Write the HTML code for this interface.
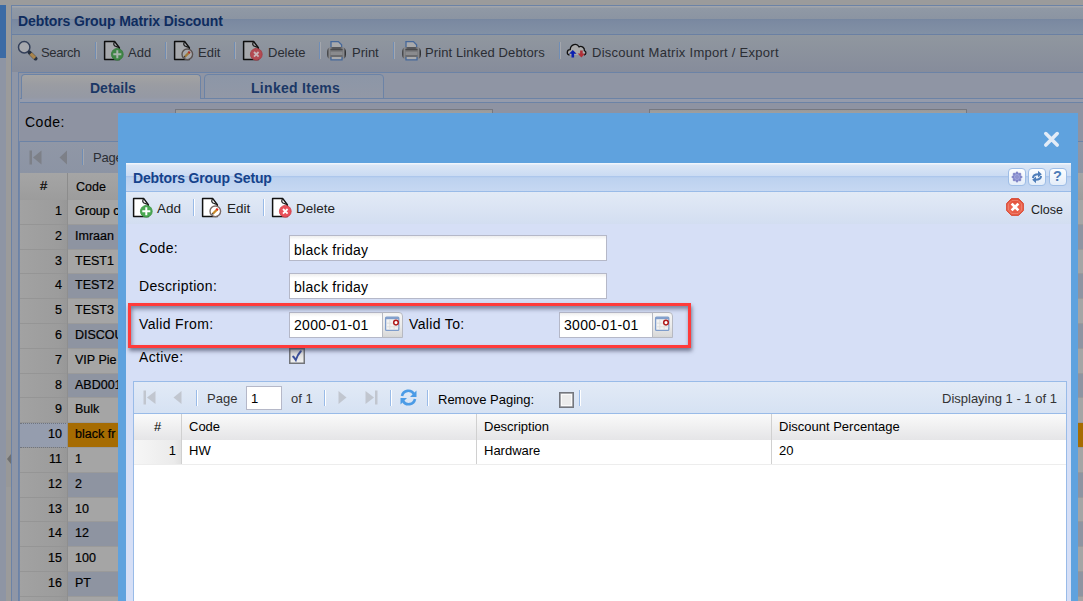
<!DOCTYPE html>
<html><head><meta charset="utf-8">
<style>
*{box-sizing:border-box}
html,body{margin:0;padding:0}
body{width:1083px;height:601px;overflow:hidden;position:relative;background:#9b9b9b;font-family:"Liberation Sans",sans-serif;color:#000}
.a{position:absolute}
.t{position:absolute;white-space:nowrap;line-height:1}
.bgt{color:#2a2d33;font-size:13px}
.sep{position:absolute;width:1px;background:#6f8db5;box-shadow:1px 0 0 #a4a7ad}
/* background grid */
.rn{position:absolute;left:20px;width:47px;text-align:right;padding-right:5px;font-size:12px;color:#111}
.rc{position:absolute;left:68px;width:50px;font-size:12px;color:#111;padding-left:7px;overflow:hidden}
/* dialog */
.lbl{position:absolute;font-size:14px;color:#000;white-space:nowrap;line-height:1;letter-spacing:0.35px}
.fld{position:absolute;background:#fff;border:1px solid #b5b8c8;background:linear-gradient(#eeeeee 0,#ffffff 4px,#fff 100%)}
.fld span{position:absolute;left:4px;margin-top:1px;font-size:14px;white-space:nowrap;line-height:1;letter-spacing:0.3px}
.dsep{position:absolute;width:1px;background:#99bbe8;box-shadow:1px 0 0 #fff}
</style></head>
<body>
<svg width="0" height="0" style="position:absolute"><defs><linearGradient id="prg" x1="0" y1="0" x2="1" y2="0"><stop offset="0" stop-color="#3a3b3e"/><stop offset="0.14" stop-color="#8c8d90"/><stop offset="0.3" stop-color="#55565a"/><stop offset="0.7" stop-color="#55565a"/><stop offset="0.86" stop-color="#8c8d90"/><stop offset="1" stop-color="#1e1f22"/></linearGradient></defs></svg>
<!-- left edge -->
<div class="a" style="left:0;top:5px;width:6px;height:596px;background:#8e95a4"></div>
<div class="a" style="left:0;top:5px;width:6px;height:53px;background:#3c6ba5"></div>
<div class="a" style="left:6px;top:430px;width:5px;height:57px;background:#989898"></div>
<svg class="a" style="left:6px;top:453px" width="6" height="12"><path d="M5 1 L1 6 L5 11 Z" fill="#6f6f6f"/></svg>

<!-- main panel -->
<div class="a" style="left:11px;top:5px;width:1072px;height:596px;background:#8f96a6;border-left:1px solid #6c83a6;border-top:1px solid #6c83a6"></div>
<!-- header -->
<div class="a" style="left:12px;top:6px;width:1071px;height:28px;background:linear-gradient(#a2a5ab 0,#a2a5ab 1px,#9099a5 2px,#8b94a2 13px,#7686a0 13px,#7b89a1 15px,#8291a5 28px)"></div>
<div class="a" style="left:12px;top:34px;width:1071px;height:1px;background:#6a80a3"></div>
<div class="t" style="left:18px;top:14px;font-size:14px;font-weight:bold;color:#0f2c5e;letter-spacing:-0.1px">Debtors Group Matrix Discount</div>
<!-- toolbar -->
<div class="a" style="left:12px;top:35px;width:1071px;height:37px;background:linear-gradient(#90979f,#868c9b)"></div>
<!-- toolbar items -->
<svg class="a" style="left:17px;top:40px" width="21" height="21" viewBox="0 0 21 21">
  <circle cx="7.2" cy="7.2" r="5.7" fill="#a7a9ae" stroke="#34405a" stroke-width="1.5"/>
  <path d="M12.6 12.6 L18.6 18.6" stroke="#26303f" stroke-width="3.8" stroke-linecap="round"/>
  <path d="M13.6 13.6 L18 18" stroke="#a8844c" stroke-width="3.4" stroke-linecap="butt"/>
</svg>
<div class="t bgt" style="left:41px;top:46px;letter-spacing:-0.35px">Search</div>
<div class="sep" style="left:95px;top:42px;height:17px"></div>

<svg class="a" style="left:103px;top:40px" width="21" height="21" viewBox="0 0 21 21">
  <path d="M1.6 1.6 H11.8 L16.3 7.6 V19.4 H1.6 Z" fill="#a6a8ac" stroke="#0d0d0d" stroke-width="1.5" stroke-linejoin="round"/><path d="M11.8 1.6 C10 3.5 10.6 6.2 13 6.4 L16.3 7.6" fill="none" stroke="#1a1a1a" stroke-width="1.3"/>
  <circle cx="14.3" cy="14.3" r="5.9" fill="#3f8646" stroke="#357a3c" stroke-width="0.8"/><path d="M14.3 10.3 V18.3 M10.3 14.3 H18.3" stroke="#a9b3ad" stroke-width="2"/>
</svg>
<div class="t bgt" style="left:128px;top:46px">Add</div>
<div class="sep" style="left:165px;top:42px;height:17px"></div>

<svg class="a" style="left:173px;top:40px" width="21" height="21" viewBox="0 0 21 21">
  <path d="M1.6 1.6 H11.8 L16.3 7.6 V19.4 H1.6 Z" fill="#a6a8ac" stroke="#0d0d0d" stroke-width="1.5" stroke-linejoin="round"/><path d="M11.8 1.6 C10 3.5 10.6 6.2 13 6.4 L16.3 7.6" fill="none" stroke="#1a1a1a" stroke-width="1.3"/>
  <circle cx="14.3" cy="14.3" r="5.3" fill="#a6a8ac" stroke="#5a5250" stroke-width="1.4"/><path d="M11.8 16.8 L16.5 12.1" stroke="#a07a3a" stroke-width="2.2"/><path d="M15.6 13 L16.8 11.8" stroke="#b02a2a" stroke-width="2.2"/><path d="M11.3 17.3 L12 16.6" stroke="#222" stroke-width="1.5"/>
</svg>
<div class="t bgt" style="left:198px;top:46px">Edit</div>
<div class="sep" style="left:234px;top:42px;height:17px"></div>

<svg class="a" style="left:242px;top:40px" width="21" height="21" viewBox="0 0 21 21">
  <path d="M1.6 1.6 H11.8 L16.3 7.6 V19.4 H1.6 Z" fill="#a6a8ac" stroke="#0d0d0d" stroke-width="1.5" stroke-linejoin="round"/><path d="M11.8 1.6 C10 3.5 10.6 6.2 13 6.4 L16.3 7.6" fill="none" stroke="#1a1a1a" stroke-width="1.3"/>
  <circle cx="14.3" cy="14.3" r="5.9" fill="#b34a52" stroke="#a33c44" stroke-width="0.8"/><path d="M12 12 L16.6 16.6 M16.6 12 L12 16.6" stroke="#c9b5b8" stroke-width="1.8"/>
</svg>
<div class="t bgt" style="left:268px;top:46px">Delete</div>
<div class="sep" style="left:319px;top:42px;height:17px"></div>

<svg class="a" style="left:326px;top:40px" width="21" height="21" viewBox="0 0 21 21">
  <path d="M5 1.6 H12.4 L15.6 4.8 V9 H5 Z" fill="#a8a9ab" stroke="#46689a" stroke-width="1.3"/>
  <rect x="1" y="7" width="19" height="12.5" rx="4" ry="5" fill="url(#prg)"/>
  <rect x="4.5" y="9" width="12" height="8.5" fill="#6a6b6e"/>
  <rect x="4.5" y="11.5" width="12" height="3.5" fill="#8a8b8e"/>
  <path d="M4.5 9.5 H16.5" stroke="#4a4a4c" stroke-width="1"/>
  <path d="M5 17 V19.8 H16 V17" fill="#a9aaac" stroke="#46689a" stroke-width="1.3"/>
</svg>
<div class="t bgt" style="left:352px;top:46px">Print</div>
<div class="sep" style="left:393px;top:42px;height:17px"></div>

<svg class="a" style="left:401px;top:40px" width="21" height="21" viewBox="0 0 21 21">
  <path d="M5 1.6 H12.4 L15.6 4.8 V9 H5 Z" fill="#a8a9ab" stroke="#46689a" stroke-width="1.3"/>
  <rect x="1" y="7" width="19" height="12.5" rx="4" ry="5" fill="url(#prg)"/>
  <rect x="4.5" y="9" width="12" height="8.5" fill="#6a6b6e"/>
  <rect x="4.5" y="11.5" width="12" height="3.5" fill="#8a8b8e"/>
  <path d="M4.5 9.5 H16.5" stroke="#4a4a4c" stroke-width="1"/>
  <path d="M5 17 V19.8 H16 V17" fill="#a9aaac" stroke="#46689a" stroke-width="1.3"/>
</svg>
<div class="t bgt" style="left:425px;top:46px;letter-spacing:0.1px">Print Linked Debtors</div>
<div class="sep" style="left:559px;top:42px;height:17px"></div>

<svg class="a" style="left:566px;top:41px" width="21" height="19" viewBox="0 0 21 19">
  <path d="M3.5 14 C0.3 13.6 0.6 8.4 4.2 8.6 C4.6 3.6 10.6 1.4 13 5.8 C15.6 4.6 18.8 6.6 18.4 9.6 C20.6 10.4 20.4 13.8 18 14 Z" fill="#a9a9aa"/><path d="M3.5 14 C0.3 13.6 0.6 8.4 4.2 8.6 C4.6 3.6 10.6 1.4 13 5.8 C15.6 4.6 18.8 6.6 18.4 9.6 C20.6 10.4 20.4 13.8 18 14" fill="none" stroke="#101010" stroke-width="1.3"/>
  <path d="M6.8 9 L10.6 12.8 H8.1 V16.6 H5.5 V12.8 H3 Z" fill="#0a1fb0"/>
  <path d="M14.1 9.4 H16.7 V12.6 H19.2 L15.4 16.6 L11.6 12.6 H14.1 Z" fill="#b03038"/>
</svg>
<div class="t bgt" style="left:592px;top:46px;letter-spacing:0.27px">Discount Matrix Import / Export</div>

<!-- tab panel -->
<div class="a" style="left:18px;top:72px;width:1065px;height:529px;border-left:1px solid #6c83a6;border-top:1px solid #6c83a6;background:#8f95a4"></div>
<div class="a" style="left:20px;top:98px;width:1064px;height:1px;background:#6c83a6"></div>
<div class="a" style="left:20px;top:99px;width:1064px;height:3px;background:#959bab"></div>
<div class="a" style="left:20px;top:102px;width:1064px;height:1px;background:#6c83a6"></div>
<div class="a" style="left:21px;top:74px;width:180px;height:25px;border:1px solid #6c83a6;border-bottom:none;border-radius:4px 4px 0 0;background:linear-gradient(#a3a3a3 0,#9a9ca2 10px,#9599a4 22px,#959bab 25px)"></div>
<div class="a" style="left:204px;top:74px;width:180px;height:25px;border:1px solid #6c83a6;border-radius:4px 4px 0 0;background:linear-gradient(#8c96a7 0,#9298a6 24px)"></div>
<div class="t" style="left:90px;top:81px;font-size:14px;font-weight:bold;color:#1b3766">Details</div>
<div class="t" style="left:251px;top:81px;font-size:14px;font-weight:bold;color:#1b3766;letter-spacing:0.3px">Linked Items</div>
<!-- background form -->
<div class="a" style="left:20px;top:103px;width:1064px;height:38px;background:#8e93a2"></div>
<div class="t" style="left:25px;top:115px;font-size:14px;color:#000;letter-spacing:0.5px">Code:</div>
<div class="a" style="left:175px;top:109px;width:318px;height:26px;border:1px solid #767880;background:linear-gradient(#9a9a9a,#a2a2a2 5px)"></div>
<div class="a" style="left:649px;top:109px;width:318px;height:26px;border:1px solid #767880;background:linear-gradient(#9a9a9a,#a2a2a2 5px)"></div>
<div class="a" style="left:20px;top:141px;width:1064px;height:1px;background:#6c83a6"></div>
<!-- background paging toolbar -->
<div class="a" style="left:19px;top:141px;width:1px;height:460px;background:#7286a8"></div>
<div class="a" style="left:20px;top:142px;width:1064px;height:31px;background:linear-gradient(#9097a6,#8c94a4)"></div>
<svg class="a" style="left:29px;top:150px" width="14" height="15" viewBox="0 0 14 15"><rect x="0.5" y="0.5" width="2.5" height="14" fill="#7d8088"/><path d="M12.5 0.5 V14.5 L4 7.5 Z" fill="#7d8088"/></svg>
<svg class="a" style="left:59px;top:150px" width="9" height="15" viewBox="0 0 9 15"><path d="M8 0.5 V14.5 L0.5 7.5 Z" fill="#7d8088"/></svg>
<div class="sep" style="left:82px;top:149px;height:16px"></div>
<div class="t bgt" style="left:93px;top:151px;letter-spacing:-0.2px">Page</div>
<!-- background grid header -->
<div class="a" style="left:20px;top:173px;width:1063px;height:27px;background:linear-gradient(#a5a5a5,#9c9c9c)"></div>
<div class="a" style="left:67px;top:173px;width:1px;height:27px;background:#8c8c8c"></div>
<div class="t" style="left:40px;top:179px;font-size:13px;color:#000;-webkit-text-stroke:0.2px #000">#</div>
<div class="t" style="left:76px;top:181px;font-size:12.5px;color:#000;-webkit-text-stroke:0.15px #000">Code</div>

<!-- background grid rows -->
<div class="a" style="left:20px;top:200.0px;width:48px;height:24.8px;background:linear-gradient(90deg,#a2a2a2,#9c9c9c 80%,#979797);border-bottom:1px solid #959595"></div><div class="a" style="left:68px;top:200.0px;width:1015px;height:24.8px;background:#a5a5a5;border-bottom:1px solid #9a9a9a"></div><div class="t" style="left:19px;width:43px;text-align:right;top:205.0px;font-size:12.5px;color:#000;-webkit-text-stroke:0.2px #000">1</div><div class="t" style="left:75px;top:205.0px;font-size:12.5px;color:#000;-webkit-text-stroke:0.2px #000">Group c</div>
<div class="a" style="left:20px;top:224.8px;width:48px;height:24.8px;background:linear-gradient(90deg,#a2a2a2,#9c9c9c 80%,#979797);border-bottom:1px solid #959595"></div><div class="a" style="left:68px;top:224.8px;width:1015px;height:24.8px;background:#8e94a1;border-bottom:1px solid #9a9a9a"></div><div class="t" style="left:19px;width:43px;text-align:right;top:229.8px;font-size:12.5px;color:#000;-webkit-text-stroke:0.2px #000">2</div><div class="t" style="left:75px;top:229.8px;font-size:12.5px;color:#000;-webkit-text-stroke:0.2px #000">Imraan</div>
<div class="a" style="left:20px;top:249.6px;width:48px;height:24.8px;background:linear-gradient(90deg,#a2a2a2,#9c9c9c 80%,#979797);border-bottom:1px solid #959595"></div><div class="a" style="left:68px;top:249.6px;width:1015px;height:24.8px;background:#a5a5a5;border-bottom:1px solid #9a9a9a"></div><div class="t" style="left:19px;width:43px;text-align:right;top:254.6px;font-size:12.5px;color:#000;-webkit-text-stroke:0.2px #000">3</div><div class="t" style="left:75px;top:254.6px;font-size:12.5px;color:#000;-webkit-text-stroke:0.2px #000">TEST1</div>
<div class="a" style="left:20px;top:274.4px;width:48px;height:24.8px;background:linear-gradient(90deg,#a2a2a2,#9c9c9c 80%,#979797);border-bottom:1px solid #959595"></div><div class="a" style="left:68px;top:274.4px;width:1015px;height:24.8px;background:#8e94a1;border-bottom:1px solid #9a9a9a"></div><div class="t" style="left:19px;width:43px;text-align:right;top:279.4px;font-size:12.5px;color:#000;-webkit-text-stroke:0.2px #000">4</div><div class="t" style="left:75px;top:279.4px;font-size:12.5px;color:#000;-webkit-text-stroke:0.2px #000">TEST2</div>
<div class="a" style="left:20px;top:299.2px;width:48px;height:24.8px;background:linear-gradient(90deg,#a2a2a2,#9c9c9c 80%,#979797);border-bottom:1px solid #959595"></div><div class="a" style="left:68px;top:299.2px;width:1015px;height:24.8px;background:#a5a5a5;border-bottom:1px solid #9a9a9a"></div><div class="t" style="left:19px;width:43px;text-align:right;top:304.2px;font-size:12.5px;color:#000;-webkit-text-stroke:0.2px #000">5</div><div class="t" style="left:75px;top:304.2px;font-size:12.5px;color:#000;-webkit-text-stroke:0.2px #000">TEST3</div>
<div class="a" style="left:20px;top:324.0px;width:48px;height:24.8px;background:linear-gradient(90deg,#a2a2a2,#9c9c9c 80%,#979797);border-bottom:1px solid #959595"></div><div class="a" style="left:68px;top:324.0px;width:1015px;height:24.8px;background:#8e94a1;border-bottom:1px solid #9a9a9a"></div><div class="t" style="left:19px;width:43px;text-align:right;top:329.0px;font-size:12.5px;color:#000;-webkit-text-stroke:0.2px #000">6</div><div class="t" style="left:75px;top:329.0px;font-size:12.5px;color:#000;-webkit-text-stroke:0.2px #000">DISCOU</div>
<div class="a" style="left:20px;top:348.8px;width:48px;height:24.8px;background:linear-gradient(90deg,#a2a2a2,#9c9c9c 80%,#979797);border-bottom:1px solid #959595"></div><div class="a" style="left:68px;top:348.8px;width:1015px;height:24.8px;background:#a5a5a5;border-bottom:1px solid #9a9a9a"></div><div class="t" style="left:19px;width:43px;text-align:right;top:353.8px;font-size:12.5px;color:#000;-webkit-text-stroke:0.2px #000">7</div><div class="t" style="left:75px;top:353.8px;font-size:12.5px;color:#000;-webkit-text-stroke:0.2px #000">VIP Pie</div>
<div class="a" style="left:20px;top:373.6px;width:48px;height:24.8px;background:linear-gradient(90deg,#a2a2a2,#9c9c9c 80%,#979797);border-bottom:1px solid #959595"></div><div class="a" style="left:68px;top:373.6px;width:1015px;height:24.8px;background:#8e94a1;border-bottom:1px solid #9a9a9a"></div><div class="t" style="left:19px;width:43px;text-align:right;top:378.6px;font-size:12.5px;color:#000;-webkit-text-stroke:0.2px #000">8</div><div class="t" style="left:75px;top:378.6px;font-size:12.5px;color:#000;-webkit-text-stroke:0.2px #000">ABD001</div>
<div class="a" style="left:20px;top:398.4px;width:48px;height:24.8px;background:linear-gradient(90deg,#a2a2a2,#9c9c9c 80%,#979797);border-bottom:1px solid #959595"></div><div class="a" style="left:68px;top:398.4px;width:1015px;height:24.8px;background:#a5a5a5;border-bottom:1px solid #9a9a9a"></div><div class="t" style="left:19px;width:43px;text-align:right;top:403.4px;font-size:12.5px;color:#000;-webkit-text-stroke:0.2px #000">9</div><div class="t" style="left:75px;top:403.4px;font-size:12.5px;color:#000;-webkit-text-stroke:0.2px #000">Bulk</div>
<div class="a" style="left:20px;top:423.2px;width:48px;height:24.8px;background:#959dae;border-bottom:1px solid #959595"></div><div class="a" style="left:68px;top:423.2px;width:1015px;height:24.8px;background:#a66c02;border-bottom:1px solid #9a9a9a"></div><div class="a" style="left:20px;top:423.2px;width:48px;height:24.8px;border-top:1px dotted #70757f;border-bottom:1px dotted #70757f"></div><div class="t" style="left:19px;width:43px;text-align:right;top:428.2px;font-size:12.5px;color:#000;-webkit-text-stroke:0.2px #000">10</div><div class="t" style="left:75px;top:428.2px;font-size:12.5px;color:#000;-webkit-text-stroke:0.2px #000">black fr</div>
<div class="a" style="left:20px;top:448.0px;width:48px;height:24.8px;background:linear-gradient(90deg,#a2a2a2,#9c9c9c 80%,#979797);border-bottom:1px solid #959595"></div><div class="a" style="left:68px;top:448.0px;width:1015px;height:24.8px;background:#a5a5a5;border-bottom:1px solid #9a9a9a"></div><div class="t" style="left:19px;width:43px;text-align:right;top:453.0px;font-size:12.5px;color:#000;-webkit-text-stroke:0.2px #000">11</div><div class="t" style="left:75px;top:453.0px;font-size:12.5px;color:#000;-webkit-text-stroke:0.2px #000">1</div>
<div class="a" style="left:20px;top:472.8px;width:48px;height:24.8px;background:linear-gradient(90deg,#a2a2a2,#9c9c9c 80%,#979797);border-bottom:1px solid #959595"></div><div class="a" style="left:68px;top:472.8px;width:1015px;height:24.8px;background:#8e94a1;border-bottom:1px solid #9a9a9a"></div><div class="t" style="left:19px;width:43px;text-align:right;top:477.8px;font-size:12.5px;color:#000;-webkit-text-stroke:0.2px #000">12</div><div class="t" style="left:75px;top:477.8px;font-size:12.5px;color:#000;-webkit-text-stroke:0.2px #000">2</div>
<div class="a" style="left:20px;top:497.6px;width:48px;height:24.8px;background:linear-gradient(90deg,#a2a2a2,#9c9c9c 80%,#979797);border-bottom:1px solid #959595"></div><div class="a" style="left:68px;top:497.6px;width:1015px;height:24.8px;background:#a5a5a5;border-bottom:1px solid #9a9a9a"></div><div class="t" style="left:19px;width:43px;text-align:right;top:502.6px;font-size:12.5px;color:#000;-webkit-text-stroke:0.2px #000">13</div><div class="t" style="left:75px;top:502.6px;font-size:12.5px;color:#000;-webkit-text-stroke:0.2px #000">10</div>
<div class="a" style="left:20px;top:522.4px;width:48px;height:24.8px;background:linear-gradient(90deg,#a2a2a2,#9c9c9c 80%,#979797);border-bottom:1px solid #959595"></div><div class="a" style="left:68px;top:522.4px;width:1015px;height:24.8px;background:#8e94a1;border-bottom:1px solid #9a9a9a"></div><div class="t" style="left:19px;width:43px;text-align:right;top:527.4px;font-size:12.5px;color:#000;-webkit-text-stroke:0.2px #000">14</div><div class="t" style="left:75px;top:527.4px;font-size:12.5px;color:#000;-webkit-text-stroke:0.2px #000">12</div>
<div class="a" style="left:20px;top:547.2px;width:48px;height:24.8px;background:linear-gradient(90deg,#a2a2a2,#9c9c9c 80%,#979797);border-bottom:1px solid #959595"></div><div class="a" style="left:68px;top:547.2px;width:1015px;height:24.8px;background:#a5a5a5;border-bottom:1px solid #9a9a9a"></div><div class="t" style="left:19px;width:43px;text-align:right;top:552.2px;font-size:12.5px;color:#000;-webkit-text-stroke:0.2px #000">15</div><div class="t" style="left:75px;top:552.2px;font-size:12.5px;color:#000;-webkit-text-stroke:0.2px #000">100</div>
<div class="a" style="left:20px;top:572.0px;width:48px;height:24.8px;background:linear-gradient(90deg,#a2a2a2,#9c9c9c 80%,#979797);border-bottom:1px solid #959595"></div><div class="a" style="left:68px;top:572.0px;width:1015px;height:24.8px;background:#8e94a1;border-bottom:1px solid #9a9a9a"></div><div class="t" style="left:19px;width:43px;text-align:right;top:577.0px;font-size:12.5px;color:#000;-webkit-text-stroke:0.2px #000">16</div><div class="t" style="left:75px;top:577.0px;font-size:12.5px;color:#000;-webkit-text-stroke:0.2px #000">PT</div>
<div class="a" style="left:20px;top:596.8px;width:48px;height:24.8px;background:linear-gradient(90deg,#a2a2a2,#9c9c9c 80%,#979797);border-bottom:1px solid #959595"></div><div class="a" style="left:68px;top:596.8px;width:1015px;height:24.8px;background:#a5a5a5;border-bottom:1px solid #9a9a9a"></div><div class="a" style="left:67px;top:200px;width:1px;height:401px;background:#8f8f8f"></div>

<!-- ===== DIALOG ===== -->
<div class="a" style="left:118px;top:113px;width:960px;height:488px;background:#5fa2de"></div>
<svg class="a" style="left:1043px;top:131px" width="17" height="17" viewBox="0 0 17 17"><path d="M2.8 2.6 L14.2 14 M14.2 2.6 L2.8 14" stroke="#e3ecf7" stroke-width="3.6" stroke-linecap="round"/></svg>
<!-- inner panel -->
<div class="a" style="left:126px;top:163px;width:945px;height:438px;background:#d6dff6"></div>
<div class="a" style="left:126px;top:163px;width:945px;height:28px;background:linear-gradient(#f0f5fc 0,#f0f5fc 1px,#dbe6f5 2px,#cadbf3 13px,#a8c3ea 13px,#b2cbee 14px,#bcd1ef 15px,#c6d8f2 28px)"></div>
<div class="a" style="left:126px;top:191px;width:945px;height:1px;background:#99bbe8"></div>
<div class="t" style="left:133px;top:171px;font-size:14px;font-weight:bold;color:#15428b;letter-spacing:-0.15px">Debtors Group Setup</div>
<!-- tool buttons -->
<div class="a" style="left:1008px;top:168px;width:18px;height:18px;border:1px solid #9ebde6;border-radius:4px;background:linear-gradient(#fdfeff,#e4edf9)"></div>
<div class="a" style="left:1028px;top:168px;width:18px;height:18px;border:1px solid #9ebde6;border-radius:4px;background:linear-gradient(#fdfeff,#e4edf9)"></div>
<div class="a" style="left:1049px;top:168px;width:18px;height:18px;border:1px solid #9ebde6;border-radius:4px;background:linear-gradient(#fdfeff,#e4edf9)"></div>
<svg class="a" style="left:1010px;top:170px" width="14" height="14" viewBox="-1.6 -1.6 17.2 17.2"><g fill="#8a8fd0" stroke="#7176bb" stroke-width="0.6"><circle cx="7" cy="7" r="4.6"/><circle cx="7" cy="1.9" r="1.3"/><circle cx="7" cy="12.1" r="1.3"/><circle cx="1.9" cy="7" r="1.3"/><circle cx="12.1" cy="7" r="1.3"/><circle cx="3.4" cy="3.4" r="1.3"/><circle cx="10.6" cy="3.4" r="1.3"/><circle cx="3.4" cy="10.6" r="1.3"/><circle cx="10.6" cy="10.6" r="1.3"/></g><circle cx="7" cy="7" r="3.6" fill="#9ea3dc"/><circle cx="7" cy="7" r="1.6" fill="none" stroke="#7d82c0" stroke-width="0.8"/></svg>
<svg class="a" style="left:1030px;top:170px" width="14" height="14" viewBox="0 0 14 14"><path d="M3 8 C3 5 5 4.2 8.5 4.2" fill="none" stroke="#4e7db9" stroke-width="2"/><path d="M8 0.8 L11.8 4.2 L8 7.6 Z" fill="#4e7db9"/><path d="M11 6 C11 9 9 9.8 5.5 9.8" fill="none" stroke="#4e7db9" stroke-width="2"/><path d="M6 6.4 L2.2 9.8 L6 13.2 Z" fill="#4e7db9"/></svg>
<div class="t" style="left:1053px;top:169px;font-size:14.5px;font-weight:bold;color:#4f7db8">?</div>
<!-- dialog toolbar -->
<div class="a" style="left:126px;top:192px;width:945px;height:32px;background:linear-gradient(#e2eaf6,#d3def1)"></div>
<svg class="a" style="left:132px;top:197px" width="21" height="21" viewBox="0 0 21 21"><path d="M1.6 1.6 H11.8 L16.3 7.6 V19.4 H1.6 Z" fill="#fff" stroke="#111" stroke-width="1.5" stroke-linejoin="round"/><path d="M11.8 1.6 C10 3.5 10.6 6.2 13 6.4 L16.3 7.6" fill="none" stroke="#222" stroke-width="1.3"/><circle cx="14.3" cy="14.3" r="5.9" fill="#4aa852" stroke="#3b9443" stroke-width="0.8"/><path d="M14.3 10.3 V18.3 M10.3 14.3 H18.3" stroke="#fff" stroke-width="2"/></svg>
<div class="t" style="left:157px;top:202px;font-size:13.5px;color:#222">Add</div>
<div class="dsep" style="left:193px;top:199px;height:17px"></div>
<svg class="a" style="left:201px;top:197px" width="21" height="21" viewBox="0 0 21 21"><path d="M1.6 1.6 H11.8 L16.3 7.6 V19.4 H1.6 Z" fill="#fff" stroke="#111" stroke-width="1.5" stroke-linejoin="round"/><path d="M11.8 1.6 C10 3.5 10.6 6.2 13 6.4 L16.3 7.6" fill="none" stroke="#222" stroke-width="1.3"/><circle cx="14.3" cy="14.3" r="5.3" fill="#fff" stroke="#7a6a66" stroke-width="1.4"/><path d="M11.8 16.8 L16.5 12.1" stroke="#c88a2a" stroke-width="2.2"/><path d="M15.6 13 L16.8 11.8" stroke="#f01818" stroke-width="2.2"/><path d="M11.3 17.3 L12 16.6" stroke="#222" stroke-width="1.5"/></svg>
<div class="t" style="left:227px;top:202px;font-size:13.5px;color:#222">Edit</div>
<div class="dsep" style="left:263px;top:199px;height:17px"></div>
<svg class="a" style="left:271px;top:197px" width="21" height="21" viewBox="0 0 21 21"><path d="M1.6 1.6 H11.8 L16.3 7.6 V19.4 H1.6 Z" fill="#fff" stroke="#111" stroke-width="1.5" stroke-linejoin="round"/><path d="M11.8 1.6 C10 3.5 10.6 6.2 13 6.4 L16.3 7.6" fill="none" stroke="#222" stroke-width="1.3"/><circle cx="14.3" cy="14.3" r="5.9" fill="#e8505a" stroke="#d03c46" stroke-width="0.8"/><path d="M12 12 L16.6 16.6 M16.6 12 L12 16.6" stroke="#fff" stroke-width="1.8"/></svg>
<div class="t" style="left:296px;top:202px;font-size:13.5px;color:#222">Delete</div>
<svg class="a" style="left:1006px;top:198px" width="18" height="18" viewBox="0 0 18 18"><defs><linearGradient id="clg" x1="0" y1="0" x2="0" y2="1"><stop offset="0" stop-color="#e04a32"/><stop offset="0.5" stop-color="#ec6450"/><stop offset="1" stop-color="#e45840"/></linearGradient></defs><path d="M5.4 0.6 H12.6 L17.4 5.4 V12.6 L12.6 17.4 H5.4 L0.6 12.6 V5.4 Z" fill="url(#clg)" stroke="#d8503c" stroke-width="1"/><path d="M6 2.4 H12 L15.6 6 V12 L12 15.6 H6 L2.4 12 V6 Z" fill="none" stroke="#f08a78" stroke-width="0.8"/><path d="M5.6 5.6 L12.4 12.4 M12.4 5.6 L5.6 12.4" stroke="#fff" stroke-width="2.7"/></svg>
<div class="t" style="left:1031px;top:204px;font-size:12.5px;color:#222">Close</div>

<!-- dialog form -->
<div class="lbl" style="left:139px;top:241px">Code:</div>
<div class="fld" style="left:289px;top:235px;width:318px;height:26px"><span style="top:6px">black friday</span></div>
<div class="lbl" style="left:139px;top:279px">Description:</div>
<div class="fld" style="left:289px;top:273px;width:318px;height:26px"><span style="top:5px">black friday</span></div>
<div class="lbl" style="left:139px;top:317px">Valid From:</div>
<div class="fld" style="left:289px;top:312px;width:94px;height:26px"><span style="top:4px">2000-01-01</span></div>
<svg class="a" style="left:382px;top:312px" width="21" height="26" viewBox="0 0 21 26"><defs><linearGradient id="tg1" x1="0" y1="0" x2="0" y2="1"><stop offset="0" stop-color="#f6f6f6"/><stop offset="0.5" stop-color="#ececec"/><stop offset="1" stop-color="#d6d6d6"/></linearGradient></defs><path d="M0.5 0.5 H17 Q20.5 0.5 20.5 4 V25.5 H0.5 Z" fill="url(#tg1)" stroke="#b6b9c2"/><rect x="3.6" y="5.2" width="13.2" height="13.2" rx="1" fill="#f3f3f3" stroke="#7f9dcb" stroke-width="1.3"/><rect x="3.6" y="5.2" width="13.2" height="2" fill="#7f9dcb"/><path d="M7.8 7.5 V18 M12.2 7.5 V18 M4 11.2 H16.5 M4 14.8 H16.5" stroke="#dcdcdc" stroke-width="0.9"/><circle cx="14" cy="10.6" r="2.3" fill="#fff" stroke="#b01a1a" stroke-width="1.5"/></svg>
<div class="lbl" style="left:409px;top:317px">Valid To:</div>
<div class="fld" style="left:559px;top:312px;width:94px;height:26px"><span style="top:4px">3000-01-01</span></div>
<svg class="a" style="left:652px;top:312px" width="21" height="26" viewBox="0 0 21 26"><defs><linearGradient id="tg2" x1="0" y1="0" x2="0" y2="1"><stop offset="0" stop-color="#f6f6f6"/><stop offset="0.5" stop-color="#ececec"/><stop offset="1" stop-color="#d6d6d6"/></linearGradient></defs><path d="M0.5 0.5 H17 Q20.5 0.5 20.5 4 V25.5 H0.5 Z" fill="url(#tg2)" stroke="#b6b9c2"/><rect x="3.6" y="5.2" width="13.2" height="13.2" rx="1" fill="#f3f3f3" stroke="#7f9dcb" stroke-width="1.3"/><rect x="3.6" y="5.2" width="13.2" height="2" fill="#7f9dcb"/><path d="M7.8 7.5 V18 M12.2 7.5 V18 M4 11.2 H16.5 M4 14.8 H16.5" stroke="#dcdcdc" stroke-width="0.9"/><circle cx="14" cy="10.6" r="2.3" fill="#fff" stroke="#b01a1a" stroke-width="1.5"/></svg>
<div class="lbl" style="left:139px;top:350px">Active:</div>
<svg class="a" style="left:289px;top:348px" width="16" height="16" viewBox="0 0 16 16"><defs><linearGradient id="cbg" x1="0" y1="0" x2="0" y2="1"><stop offset="0" stop-color="#d4d4d4"/><stop offset="1" stop-color="#f2f2f2"/></linearGradient></defs><rect x="0.75" y="0.75" width="14.5" height="14.5" fill="url(#cbg)" stroke="#727479" stroke-width="1.5"/><path d="M4.2 8.6 C5 9.2 5.8 10.5 6.8 12 C8 8.5 9.5 5.5 11.8 3.2" fill="none" stroke="#3a4f9a" stroke-width="2" stroke-linecap="round"/></svg>
<!-- red highlight box -->
<div class="a" style="left:128px;top:303px;width:563px;height:45px;border:3px solid #ff3b3b;box-shadow:1px 3px 4px rgba(50,55,80,0.6), inset 1px 3px 4px rgba(50,55,85,0.55)"></div>
<!-- dialog grid panel -->
<div class="a" style="left:133px;top:381px;width:934px;height:220px;background:#fff;border:1px solid #99bbe8;border-bottom:none"></div>
<div class="a" style="left:134px;top:382px;width:932px;height:31px;background:linear-gradient(#e2eaf6,#d6e2f3)"></div>
<div class="a" style="left:134px;top:413px;width:932px;height:1px;background:#99bbe8"></div>
<svg class="a" style="left:143px;top:390px" width="14" height="15" viewBox="0 0 14 15"><rect x="0.5" y="0.5" width="2.5" height="14" fill="#c1c6cf"/><path d="M12.5 1 V14 L4 7.5 Z" fill="#c1c6cf"/></svg>
<svg class="a" style="left:173px;top:390px" width="9" height="15" viewBox="0 0 9 15"><path d="M8.5 1 V14 L0.5 7.5 Z" fill="#c1c6cf"/></svg>
<div class="dsep" style="left:196px;top:390px;height:16px"></div>
<div class="t" style="left:207px;top:392px;font-size:13px;color:#333">Page</div>
<div class="a" style="left:246px;top:386px;width:36px;height:24px;background:#fff;border:1px solid #b5b8c8"></div>
<div class="t" style="left:251px;top:392px;font-size:13px;color:#000">1</div>
<div class="t" style="left:291px;top:392px;font-size:13px;color:#333">of 1</div>
<div class="dsep" style="left:324px;top:390px;height:16px"></div>
<svg class="a" style="left:338px;top:390px" width="9" height="15" viewBox="0 0 9 15"><path d="M0.5 1 V14 L8.5 7.5 Z" fill="#c1c6cf"/></svg>
<svg class="a" style="left:364px;top:390px" width="14" height="15" viewBox="0 0 14 15"><path d="M1.5 1 V14 L10 7.5 Z" fill="#c1c6cf"/><rect x="11" y="0.5" width="2.5" height="14" fill="#c1c6cf"/></svg>
<div class="dsep" style="left:390px;top:390px;height:16px"></div>
<svg class="a" style="left:399px;top:388px" width="19" height="19" viewBox="0 0 19 19"><path d="M3 8 A6.5 6.5 0 0 1 15 6" fill="none" stroke="#4b9be6" stroke-width="2.6"/><path d="M17.5 2.5 V9 H11 Z" fill="#4b9be6"/><path d="M16 11 A6.5 6.5 0 0 1 4 13" fill="none" stroke="#4b9be6" stroke-width="2.6"/><path d="M1.5 16.5 V10 H8 Z" fill="#4b9be6"/></svg>
<div class="dsep" style="left:427px;top:390px;height:16px"></div>
<div class="t" style="left:438px;top:393px;font-size:13px;color:#000">Remove Paging:</div>
<svg class="a" style="left:559px;top:392px" width="15" height="16" viewBox="0 0 15 16"><rect x="0.75" y="0.75" width="13.5" height="14.5" fill="#d8d8d8" stroke="#74777e" stroke-width="1.5"/><rect x="2.5" y="2.5" width="10" height="11" fill="#ececec" stroke="#fafafa" stroke-width="1"/></svg>
<div class="dsep" style="left:579px;top:390px;height:16px"></div>
<div class="t" style="left:942px;top:392px;font-size:13px;color:#333">Displaying 1 - 1 of 1</div>
<!-- grid header -->
<div class="a" style="left:134px;top:414px;width:932px;height:26px;background:linear-gradient(#fafafa,#e5e5e7)"></div>
<div class="a" style="left:181px;top:414px;width:1px;height:50px;background:#d0d0d0"></div>
<div class="a" style="left:476px;top:414px;width:1px;height:50px;background:#d0d0d0"></div>
<div class="a" style="left:771px;top:414px;width:1px;height:50px;background:#d0d0d0"></div>
<div class="t" style="left:154px;top:420px;font-size:13px;color:#000">#</div>
<div class="t" style="left:189px;top:420px;font-size:13px;color:#000">Code</div>
<div class="t" style="left:484px;top:420px;font-size:13px;color:#000">Description</div>
<div class="t" style="left:779px;top:420px;font-size:13px;color:#000">Discount Percentage</div>
<!-- grid row -->
<div class="a" style="left:134px;top:440px;width:47px;height:24px;background:linear-gradient(90deg,#f6f6f6,#ebebeb 85%,#e2e2e2)"></div>
<div class="a" style="left:134px;top:464px;width:932px;height:1px;background:#ededed"></div>
<div class="t" style="left:134px;width:42px;text-align:right;top:444px;font-size:13px;color:#000">1</div>
<div class="t" style="left:189px;top:444px;font-size:13px;color:#000">HW</div>
<div class="t" style="left:484px;top:444px;font-size:13px;color:#000">Hardware</div>
<div class="t" style="left:779px;top:444px;font-size:13px;color:#000">20</div>
</body></html>
